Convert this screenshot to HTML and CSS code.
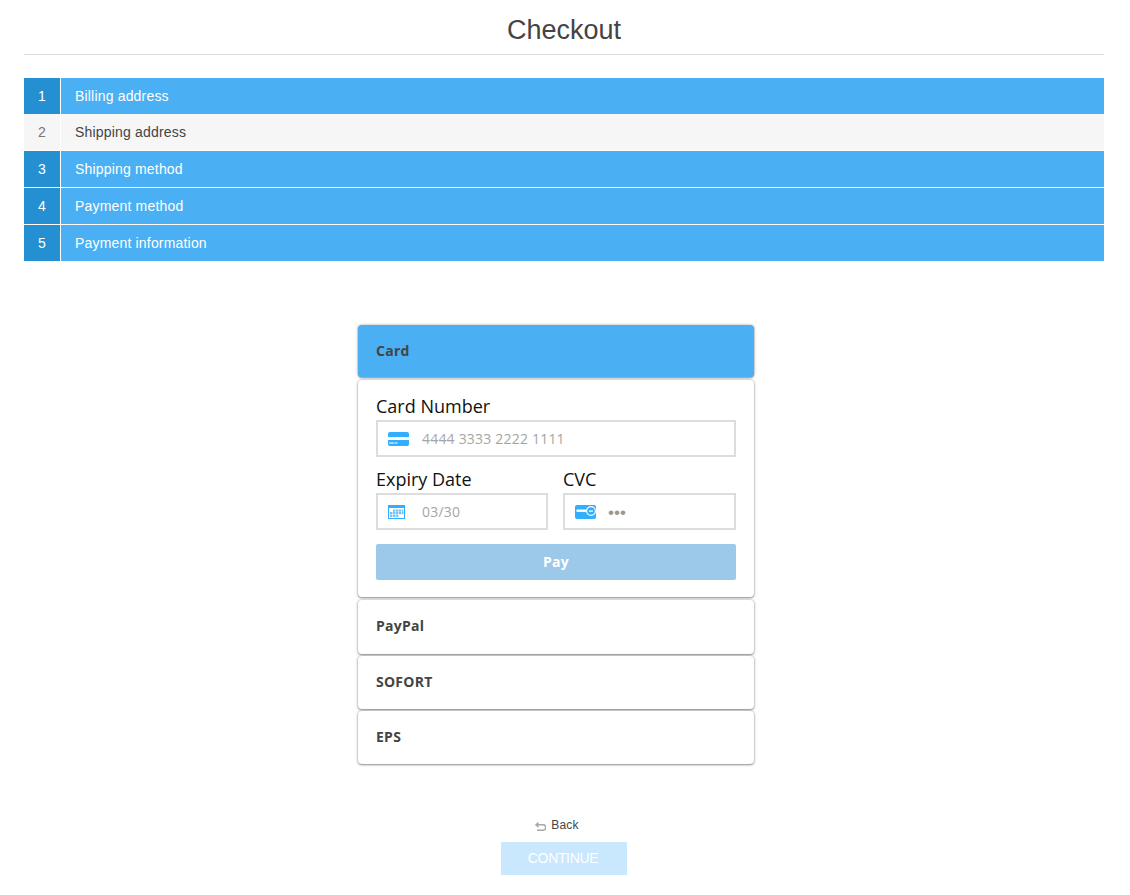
FILE: index.html
```html
<!DOCTYPE html>
<html lang="en">
<head>
<meta charset="utf-8">
<title>Checkout</title>
<link rel="stylesheet" href="styles.css">
</head>
<body>
<header class="page-title"><h1>Checkout</h1></header>
<ol class="steps">
  <li class="step step-first"><span class="step-num">1</span><span class="step-name">Billing address</span></li>
  <li class="step step-current"><span class="step-num">2</span><span class="step-name">Shipping address</span></li>
  <li class="step"><span class="step-num">3</span><span class="step-name">Shipping method</span></li>
  <li class="step"><span class="step-num">4</span><span class="step-name">Payment method</span></li>
  <li class="step"><span class="step-num">5</span><span class="step-name">Payment information</span></li>
</ol>
<main class="payment">
  <div class="tab tab-active">Card</div>
  <form class="card-form">
    <div class="field">
      <label class="label">Card Number</label>
      <div class="input">
        <svg class="icon" width="21" height="14" viewBox="0 0 21 14"><rect width="21" height="14" rx="2" fill="#32aeff"/><rect y="5" width="21" height="3" fill="#fff"/><rect x="1" y="10.5" width="5" height="1" fill="#fff"/><rect x="6.5" y="10.5" width="3" height="1" fill="#fff"/></svg>
        <span class="placeholder">4444 3333 2222 1111</span>
      </div>
    </div>
    <div class="field-row">
      <div class="field">
        <label class="label">Expiry Date</label>
        <div class="input">
          <svg class="icon icon-cal" width="17" height="14" viewBox="0 0 17 14"><rect x=".5" y=".5" width="16" height="13" fill="#fff" stroke="#32aeff"/><rect x="0" y="0" width="17" height="3" fill="#32aeff"/><g fill="#6fc3fb"><rect x="5" y="4.5" width="2.4" height="2.2"/><rect x="8" y="4.5" width="2.4" height="2.2"/><rect x="11" y="4.5" width="2.4" height="2.2"/><rect x="14" y="4.5" width="1.5" height="2.2"/><rect x="2" y="7" width="2.4" height="2.2"/><rect x="5" y="7" width="2.4" height="2.2"/><rect x="8" y="7" width="2.4" height="2.2"/><rect x="11" y="7" width="2.4" height="2.2"/><rect x="14" y="7" width="1.5" height="2.2"/><rect x="2" y="9.7" width="2.4" height="2.2"/><rect x="5" y="9.7" width="2.4" height="2.2"/><rect x="8" y="9.7" width="2.4" height="2.2"/></g></svg>
          <span class="placeholder">03/30</span>
        </div>
      </div>
      <div class="field">
        <label class="label">CVC</label>
        <div class="input">
          <svg class="icon" width="21" height="14" viewBox="0 0 21 14"><rect width="21" height="14" rx="2" fill="#32aeff"/><rect x="1.5" y="4.5" width="10" height="2.4" fill="#fff"/><circle cx="16" cy="6" r="4.4" fill="#32aeff" stroke="#fff" stroke-width="1.2"/><rect x="14" y="5.5" width="4" height="1.2" fill="#fff"/></svg>
          <span class="placeholder placeholder-dots">•••</span>
        </div>
      </div>
    </div>
    <button class="pay" type="button">Pay</button>
  </form>
  <div class="tab tab-paypal">PayPal</div>
  <div class="tab tab-sofort">SOFORT</div>
  <div class="tab tab-eps">EPS</div>
</main>
<footer class="actions">
  <a class="back"><svg class="back-icon" width="11" height="9" viewBox="0 0 11 9"><path d="M3.5 .6 1 2.8l2.5 2.2M1 2.8h7a2.4 2.4 0 0 1 0 5.4H2" fill="none" stroke="#a8a8a8" stroke-width="1.5"/></svg>Back</a>
  <button class="continue" type="button">CONTINUE</button>
</footer>
</body>
</html>
```
FILE: styles.css
```css
* { box-sizing: border-box; }
html, body { margin: 0; padding: 0; }
body {
  padding: 0 26px 20px 24px;
  background: #fff;
  color: #444;
  font-family: "Liberation Sans", Arial, sans-serif;
  font-size: 14px;
}
.page-title {
  height: 55px;
  border-bottom: 1px solid #ddd;
  text-align: center;
}
.page-title h1 {
  margin: 0;
  padding-top: 14px;
  font-size: 27px;
  line-height: 32px;
  font-weight: 400;
  color: #444;
}
.steps {
  list-style: none;
  margin: 23px 0 0;
  padding: 0;
}
.step {
  display: flex;
  height: 36px;
  margin-bottom: 1px;
  background: #fff;
  color: #fff;
  line-height: 36px;
}
.step-first { margin-bottom: 0; }
.step-num {
  width: 36px;
  margin-right: 1px;
  text-align: center;
  background: #2490d2;
}
.step-name {
  flex: 1;
  padding-left: 14px;
  letter-spacing: .18px;
  background: #4ab0f3;
}
.step-current .step-num {
  background: #f6f6f6;
  color: #777;
}
.step-current .step-name {
  background: #f6f6f6;
  color: #444;
}
.payment {
  width: 396px;
  margin: 64px 0 0 334px;
  font-family: "Open Sans", sans-serif;
}
.tab {
  display: flex;
  align-items: center;
  height: 54px;
  margin-bottom: 2px;
  padding: 0 0 2px 18px;
  border-radius: 4px;
  background: #fff;
  box-shadow: 0 1px 2px rgba(0, 0, 0, .35), 0 0 3px rgba(0, 0, 0, .3);
  font-size: 14px;
  font-weight: 700;
  letter-spacing: .25px;
  color: #444;
}
.tab-active {
  height: 52px;
  margin-bottom: 3px;
  background: #4ab0f3;
}
.tab-paypal { padding-bottom: 4px; }
.tab-sofort, .tab-eps { height: 53px; }
.card-form {
  height: 217px;
  margin-bottom: 3px;
  padding: 14px 18px 0;
  border-radius: 4px;
  background: #fff;
  box-shadow: 0 1px 2px rgba(0, 0, 0, .35), 0 0 3px rgba(0, 0, 0, .3);
}
.field-row {
  display: grid;
  grid-template-columns: 172px 173px;
  gap: 15px;
  margin-top: 10px;
}
.label {
  display: block;
  padding-bottom: 2px;
  font-size: 18px;
  line-height: 24px;
  color: #111;
}
.input {
  display: flex;
  align-items: center;
  height: 37px;
  padding-left: 10px;
  border: 2px solid #ddd;
  background: #fff;
}
.icon { flex: none; }
.icon-cal { margin-right: 4px; }
.placeholder {
  margin-left: 13px;
  font-size: 14px;
  letter-spacing: .2px;
  color: #a5a5a5;
}
.placeholder-dots {
  margin-left: 12px;
  font-family: "Liberation Sans", sans-serif;
  color: #999;
  font-size: 17px;
  letter-spacing: 0;
  padding-top: 3px;
}
.pay {
  display: block;
  width: 100%;
  height: 36px;
  margin-top: 14px;
  padding-bottom: 3px;
  border: 0;
  border-radius: 2px;
  background: #9cc8ea;
  color: #fff;
  font-family: "Open Sans", sans-serif;
  font-size: 14px;
  font-weight: 700;
  letter-spacing: .3px;
}
.actions {
  display: flex;
  flex-direction: column;
  align-items: center;
  margin: 52px 0 0;
}
.back {
  display: flex;
  align-items: center;
  gap: 5px;
  height: 18px;
  margin-right: 14px;
  font-size: 12px;
  letter-spacing: .2px;
  color: #444;
}
.back-icon { margin-top: 2px; }
.continue {
  width: 126px;
  height: 33px;
  margin-top: 8px;
  padding: 0 2px 2px 0;
  border: 0;
  background: #c9e7fd;
  color: #fff;
  font-family: "Liberation Sans", sans-serif;
  font-size: 14px;
  letter-spacing: -.35px;
}
```
